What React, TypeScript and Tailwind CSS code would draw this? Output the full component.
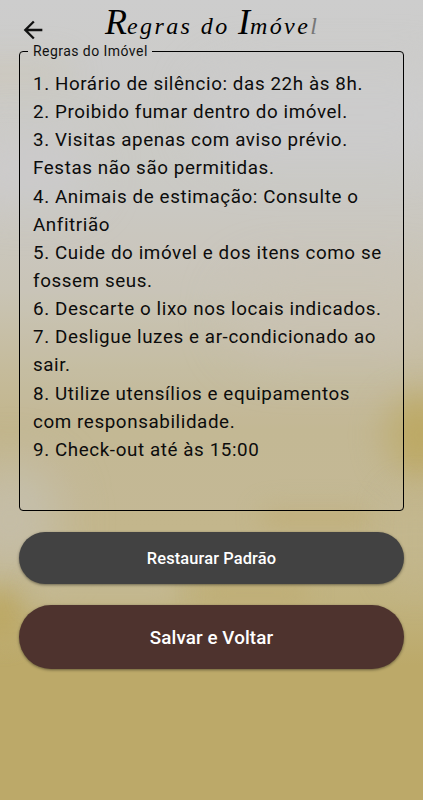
import { clsx } from 'clsx';

const rules = [
  '1. Horário de silêncio: das 22h às 8h.',
  '2. Proibido fumar dentro do imóvel.',
  '3. Visitas apenas com aviso prévio. Festas não são permitidas.',
  '4. Animais de estimação: Consulte o Anfitrião',
  '5. Cuide do imóvel e dos itens como se fossem seus.',
  '6. Descarte o lixo nos locais indicados.',
  '7. Desligue luzes e ar-condicionado ao sair.',
  '8. Utilize utensílios e equipamentos com responsabilidade.',
  '9. Check-out até às 15:00',
];

// watercolor spots over the base gradient
const spots = [
  'left-[-40px] top-[62px] w-[110px] h-[24px] bg-[#cbc2ac]/50 blur-lg',
  'left-[-30px] top-[140px] w-[120px] h-[60px] bg-[#cdccce]/80 blur-xl',
  'left-[200px] top-[70px] w-[260px] h-[90px] bg-[#cdcdce]/80 blur-xl',
  'left-[-40px] top-[460px] w-[100px] h-[120px] bg-[#c6bfae]/80 blur-xl',
  'left-[230px] top-[270px] w-[220px] h-[90px] bg-[#c9c2b0]/60 blur-xl',
  'left-[385px] top-[395px] w-[70px] h-[80px] bg-[#bca65c]/80 blur-lg',
  'left-[260px] top-[507px] w-[110px] h-[20px] bg-[#bea765]/50 blur-md',
  'left-[390px] top-[490px] w-[50px] h-[100px] bg-[#c3b88f]/60 blur-lg',
  'left-[-20px] top-[590px] w-[40px] h-[50px] bg-[#bca65f]/80 blur-md',
  'left-[30px] top-[580px] w-[150px] h-[22px] bg-[#c6bb9c]/80 blur-md',
  'left-[200px] top-[582px] w-[110px] h-[22px] bg-[#bea868]/50 blur-md',
];

interface PillProps {
  text: string;
  className: string;
}

const PillButton = ({ text, className }: PillProps) => (
  <button
    className={clsx(
      'w-full rounded-full font-medium text-white shadow-[0_1px_3px_rgba(0,0,0,0.45)]',
      className
    )}
  >
    {text}
  </button>
);

const App = () => {
  return (
    <div className="relative isolate h-[800px] w-full overflow-hidden bg-[#bca969] font-[Roboto,sans-serif]">
      <div className="absolute inset-0 -z-10 bg-[linear-gradient(to_bottom,#cdcdcd_0px,#cccbc7_110px,#cbc9c4_190px,#c9c4b5_290px,#c5bb9b_370px,#c2b58b_430px,#c3b68c_530px,#c1b380_600px,#bca969_665px)]">
        {spots.map((spot) => (
          <div key={spot} className={clsx('absolute rounded-full', spot)} />
        ))}
      </div>

      <header className="h-[42px]">
        <div className="flex items-start pl-[19px]">
          <button className="mt-4" aria-label="Voltar">
            <svg width="28" height="28" viewBox="0 0 24 24" fill="#111">
              <path d="M20 11H7.83l5.59-5.59L12 4l-8 8 8 8 1.41-1.41L7.83 13H20v-2z" />
            </svg>
          </button>
          <h1 className="ml-[58px] mt-[3px] h-[38px] whitespace-nowrap font-['Liberation_Serif',cursive] text-[24px] leading-[38px] tracking-[2.4px] italic text-black">
            <span className="text-[36px] leading-[38px] tracking-normal">
              R
            </span>
            egras do{' '}
            <span className="text-[36px] leading-[38px] tracking-normal">
              I
            </span>
            móve
            <span className="text-[#777]">l</span>
          </h1>
        </div>
      </header>

      <main className="px-[19px]">
        <fieldset className="h-[469px] rounded-[4px] border border-black bg-[#cccccc]/15 px-[13px]">
          <legend className="-ml-[5px] pl-[5px] pr-[4px] text-[14px] leading-[18px] tracking-[0.45px] text-[#111]">
            Regras do Imóvel
          </legend>
          <div className="pt-[10px] text-[18.8px] leading-[28.14px] tracking-[0.6px] text-[#0c0c0c]">
            {rules.map((rule) => (
              <p key={rule}>{rule}</p>
            ))}
          </div>
        </fieldset>

        <div className="mt-[21px] flex flex-col gap-[21px]">
          <PillButton
            text="Restaurar Padrão"
            className="h-[52px] bg-[#424242] pt-[2px] text-[16.4px] tracking-[0.13px]"
          />
          <PillButton
            text="Salvar e Voltar"
            className="h-[64px] bg-[#4e332e] pt-[2px] text-[18.8px] tracking-[0.1px]"
          />
        </div>
      </main>
    </div>
  );
};

export default App;
